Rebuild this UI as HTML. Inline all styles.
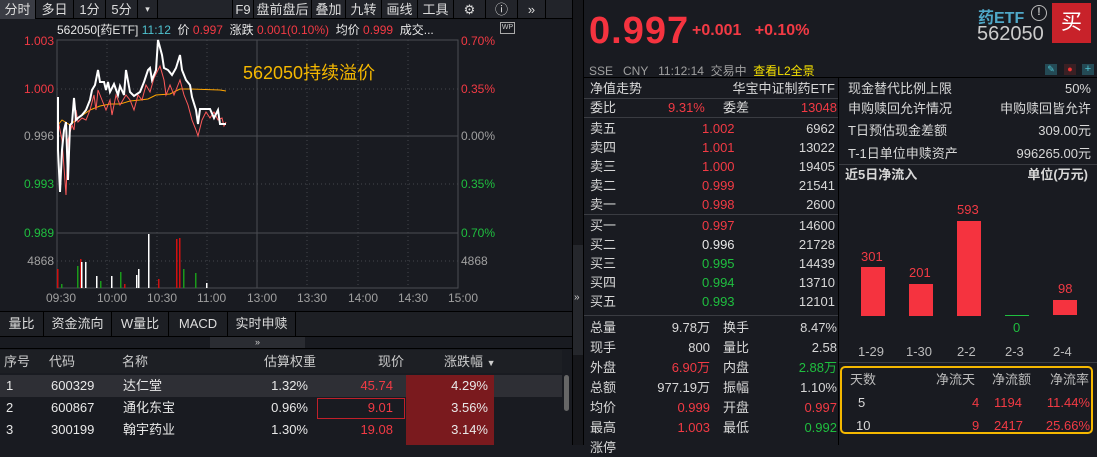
<!DOCTYPE html><html><head><meta charset="utf-8"><style>
*{margin:0;padding:0;box-sizing:border-box}
body{width:1097px;height:445px;background:#191b21;color:#d8d8d8;font-family:"Liberation Sans","Noto Sans CJK SC",sans-serif;font-size:12px;position:relative;overflow:hidden}
.a{position:absolute;white-space:nowrap}
.r{color:#f23a44}.g{color:#1fbf3f}.w{color:#e8e8e8}.gr{color:#a0a0a0}
.tb{position:absolute;top:0;height:19px;line-height:19px;font-size:13px;color:#ddd;text-align:center;border-right:1px solid #000}
.row{position:absolute;left:590px;width:245px;height:19px;font-size:13px;line-height:19px}
.row span{position:absolute;top:0;line-height:19px}
.rr{position:absolute;left:848px;width:243px;font-size:13px;height:19px;line-height:19px}
.rr span{position:absolute;top:0;line-height:19px}
</style></head><body>
<!-- toolbar -->
<div class="a" style="left:0;top:0;width:572px;height:19px;background:#22242a;border-bottom:1px solid #000"></div>
<div class="tb" style="left:0;width:36px;background:#3a3c44">分时</div>
<div class="tb" style="left:36px;width:38px">多日</div>
<div class="tb" style="left:74px;width:32px">1分</div>
<div class="tb" style="left:106px;width:32px">5分</div>
<div class="tb" style="left:138px;width:20px;font-size:9px">▾</div>
<div class="tb" style="left:232px;width:22px;border-left:1px solid #000">F9</div>
<div class="tb" style="left:254px;width:58px">盘前盘后</div>
<div class="tb" style="left:312px;width:34px">叠加</div>
<div class="tb" style="left:346px;width:36px">九转</div>
<div class="tb" style="left:382px;width:36px">画线</div>
<div class="tb" style="left:418px;width:36px">工具</div>
<div class="tb" style="left:454px;width:32px">⚙</div>
<div class="tb" style="left:486px;width:32px">ⓘ</div>
<div class="tb" style="left:518px;width:28px">»</div>
<div class="a" style="left:57px;top:21px;font-size:12px"><span class="w">562050[药ETF]</span> <span style="color:#4fc3d0">11:12</span> &nbsp;<span class="w">价</span> <span class="r">0.997</span> &nbsp;<span class="w">涨跌</span> <span class="r">0.001(0.10%)</span> &nbsp;<span class="w">均价</span> <span class="r">0.999</span> &nbsp;<span class="w">成交...</span></div>
<div class="a" style="left:500px;top:22px;width:15px;height:12px;border:1px solid #aaa;font-size:7px;line-height:10px;text-align:center;color:#ccc">WP</div>
<!-- axes labels -->
<div class="a r" style="left:0;top:34px;width:54px;text-align:right;font-size:12px">1.003</div>
<div class="a r" style="left:0;top:82px;width:54px;text-align:right">1.000</div>
<div class="a gr" style="left:0;top:129px;width:54px;text-align:right">0.996</div>
<div class="a g" style="left:0;top:177px;width:54px;text-align:right">0.993</div>
<div class="a g" style="left:0;top:226px;width:54px;text-align:right">0.989</div>
<div class="a gr" style="left:0;top:254px;width:54px;text-align:right">4868</div>
<div class="a r" style="left:461px;top:34px">0.70%</div>
<div class="a r" style="left:461px;top:82px">0.35%</div>
<div class="a gr" style="left:461px;top:129px">0.00%</div>
<div class="a g" style="left:461px;top:177px">0.35%</div>
<div class="a g" style="left:461px;top:226px">0.70%</div>
<div class="a gr" style="left:461px;top:254px">4868</div>
<svg class="a" style="left:0;top:0" width="572" height="310">
<g stroke="#45474d" stroke-dasharray="1,3" fill="none">
<line x1="57" y1="89" x2="458" y2="89"/><line x1="57" y1="184" x2="458" y2="184"/><line x1="57" y1="261" x2="458" y2="261"/>
<line x1="107" y1="40" x2="107" y2="288"/><line x1="157" y1="40" x2="157" y2="288"/><line x1="207" y1="40" x2="207" y2="288"/>
<line x1="307" y1="40" x2="307" y2="288"/><line x1="358" y1="40" x2="358" y2="288"/><line x1="408" y1="40" x2="408" y2="288"/>
</g>
<g stroke="#4a4c52" fill="none">
<rect x="57" y="40" width="401" height="248"/>
<line x1="57" y1="136" x2="458" y2="136"/><line x1="57" y1="233" x2="458" y2="233"/><line x1="257" y1="40" x2="257" y2="288"/>
</g>
<polyline fill="none" stroke="#ffa500" stroke-width="1" points="58,125 62,120 70,125 76,120 80,117 90,110 100,106 110,104 120,104 130,101 140,100 148,99 156,95 170,94 180,89 190,89 220,90 226,91"/>
<polyline fill="none" stroke="#ff5a5a" stroke-width="1" points="58,120 62,140 66,195 68,140 72,125 74,130 76,110 78,122 82,118 86,120 90,110 94,95 96,110 98,90 102,100 106,110 110,100 112,115 116,95 120,105 126,95 130,100 134,110 138,95 142,100 146,85 150,92 154,78 158,70 160,66 164,80 166,95 170,85 174,95 178,85 180,80 184,95 188,105 192,120 196,130 198,136 202,120 206,112 210,118 214,112 218,120 222,118 224,126 226,122"/>
<polyline fill="none" stroke="#fff" stroke-width="2" points="58,97 58,150 60,192 62,150 64,130 66,122 68,180 70,125 72,123 74,98 76,120 78,118 82,115 86,110 90,100 92,90 95,85 98,70 100,82 104,82 106,90 108,82 110,92 114,84 118,95 120,86 124,95 126,70 130,92 134,96 140,92 144,82 148,70 150,68 152,80 156,70 158,40 162,55 164,68 168,70 172,75 176,68 180,55 182,70 186,80 190,85 192,97 196,110 198,124 200,109 210,109 214,118 218,110 220,124 226,124"/>
<g fill="#d01010"><rect x="57" y="269" width="1.5" height="19"/><rect x="80" y="259" width="1.5" height="29"/><rect x="158" y="279" width="1.5" height="9"/><rect x="176" y="239" width="1.5" height="49"/><rect x="179" y="238" width="1.5" height="50"/><rect x="124" y="284" width="1.5" height="4"/></g>
<g fill="#fff"><rect x="81" y="262" width="1.5" height="26"/><rect x="85" y="262" width="1.5" height="26"/><rect x="96" y="276" width="1.5" height="12"/><rect x="111" y="276" width="1.5" height="12"/><rect x="136" y="275" width="1.5" height="13"/><rect x="138" y="269" width="1.5" height="19"/><rect x="148" y="234" width="1.5" height="54"/><rect x="206" y="283" width="1.5" height="5"/></g>
<g fill="#1a9a1a"><rect x="77" y="266" width="1.5" height="22"/><rect x="61" y="284" width="1.5" height="4"/><rect x="120" y="272" width="1.5" height="16"/><rect x="183" y="269" width="1.5" height="19"/><rect x="195" y="273" width="1.5" height="15"/><rect x="100" y="281" width="1.5" height="7"/></g>
</svg>
<div class="a" style="left:243px;top:59px;font-size:18px;color:#f5b800">562050持续溢价</div>
<div class="a gr" style="left:46px;top:291px;width:430px;font-size:12px">
<span class="a" style="left:0">09:30</span><span class="a" style="left:51px">10:00</span><span class="a" style="left:101px">10:30</span><span class="a" style="left:151px">11:00</span><span class="a" style="left:201px">13:00</span><span class="a" style="left:251px">13:30</span><span class="a" style="left:302px">14:00</span><span class="a" style="left:352px">14:30</span><span class="a" style="left:402px">15:00</span></div>
<!-- bottom tabs -->
<div class="a" style="left:0;top:311px;width:572px;height:26px;background:#1d1f24;border-top:1px solid #000;border-bottom:1px solid #000"></div>
<div class="a" style="left:0;top:312px;height:24px;line-height:24px;font-size:13px;color:#ddd">
<span class="a" style="left:0;width:44px;text-align:center;border-right:1px solid #000;height:24px">量比</span>
<span class="a" style="left:44px;width:68px;text-align:center;border-right:1px solid #000;height:24px">资金流向</span>
<span class="a" style="left:112px;width:57px;text-align:center;border-right:1px solid #000;height:24px">W量比</span>
<span class="a" style="left:169px;width:59px;text-align:center;border-right:1px solid #000;height:24px">MACD</span>
<span class="a" style="left:228px;width:68px;text-align:center;border-right:1px solid #000;height:24px">实时申赎</span></div>
<div class="a" style="left:210px;top:337px;width:95px;height:11px;background:#2a2c32;color:#ccc;font-size:9px;text-align:center;line-height:10px">»</div>
<div class="a" style="left:0;top:348px;width:572px;height:1px;background:#000"></div>
<div class="a" style="left:0;top:350px;width:562px;height:23px;font-size:13px;line-height:23px;color:#ccc;background:#1d1f24">
<span class="a" style="left:4px">序号</span><span class="a" style="left:49px">代码</span><span class="a" style="left:122px">名称</span><span class="a" style="left:264px">估算权重</span><span class="a" style="left:378px">现价</span><span class="a" style="left:444px">涨跌幅 <span style="font-size:9px">▼</span></span></div>
<div class="a" style="left:0;top:375px;width:562px;height:22px;background:#2e2f35"></div>
<div class="a" style="left:406px;top:375px;width:88px;height:70px;background:#7a1a1e"></div>
<div class="a" style="left:317px;top:398px;width:88px;height:21px;border:1px solid #c0202a"></div>
<div class="a" style="left:0;top:375px;width:562px;font-size:13px;line-height:22px;color:#e8e8e8">
<div style="position:relative;height:22px"><span class="a" style="left:6px">1</span><span class="a" style="left:51px">600329</span><span class="a" style="left:123px">达仁堂</span><span class="a" style="left:270px;width:38px;text-align:right">1.32%</span><span class="a r" style="left:350px;width:43px;text-align:right">45.74</span><span class="a" style="left:440px;width:48px;text-align:right">4.29%</span></div>
<div style="position:relative;height:22px"><span class="a" style="left:6px">2</span><span class="a" style="left:51px">600867</span><span class="a" style="left:123px">通化东宝</span><span class="a" style="left:270px;width:38px;text-align:right">0.96%</span><span class="a r" style="left:350px;width:43px;text-align:right">9.01</span><span class="a" style="left:440px;width:48px;text-align:right">3.56%</span></div>
<div style="position:relative;height:22px"><span class="a" style="left:6px">3</span><span class="a" style="left:51px">300199</span><span class="a" style="left:123px">翰宇药业</span><span class="a" style="left:270px;width:38px;text-align:right">1.30%</span><span class="a r" style="left:350px;width:43px;text-align:right">19.08</span><span class="a" style="left:440px;width:48px;text-align:right">3.14%</span></div></div>
<div class="a" style="left:564px;top:375px;width:5px;height:36px;background:#666;border-radius:3px"></div>
<!-- divider -->
<div class="a" style="left:572px;top:0;width:12px;height:445px;background:#16171b;border-left:1px solid #000;border-right:1px solid #000"></div>
<div class="a" style="left:573px;top:245px;width:10px;height:110px;background:#25272c"></div>
<div class="a" style="left:574px;top:292px;font-size:10px;color:#ccc">»</div>
<!-- right top -->
<div class="a r" style="left:589px;top:10px;font-size:38px;font-weight:bold;color:#f5333f;letter-spacing:1px">0.997</div>
<div class="a r" style="left:692px;top:22px;font-size:16px;font-weight:bold">+0.001 &nbsp; +0.10%</div>
<div class="a" style="left:978px;top:4px;font-size:16px;font-weight:bold;color:#4fa8c8">药ETF</div>
<div class="a" style="left:1031px;top:5px;width:16px;height:16px;border:1.5px solid #bbb;border-radius:50%;font-size:11px;text-align:center;line-height:13px;color:#bbb;font-weight:bold">!</div>
<div class="a" style="left:977px;top:23px;font-size:20px;color:#ccc">562050</div>
<div class="a" style="left:1052px;top:3px;width:39px;height:40px;background:#c8222a;color:#fff;font-size:21px;text-align:center;line-height:40px">买</div>
<div class="a gr" style="left:589px;top:62px;font-size:12px">SSE &nbsp; CNY &nbsp; 11:12:14 &nbsp;交易中 &nbsp;<span style="color:#f5e000">查看L2全景</span></div>
<div class="a" style="left:1045px;top:64px;width:12px;height:11px;background:#244a55;color:#4fc3d0;font-size:9px;text-align:center;line-height:11px">✎</div>
<div class="a" style="left:1064px;top:64px;width:12px;height:11px;background:#3a2024;color:#e33;font-size:9px;text-align:center;line-height:11px">●</div>
<div class="a" style="left:1082px;top:64px;width:12px;height:11px;background:#244a55;color:#4fc3d0;font-size:11px;text-align:center;line-height:11px">+</div>
<div class="a" style="left:584px;top:77px;width:513px;height:1px;background:#000"></div>
<div class="a" style="left:838px;top:78px;width:1px;height:367px;background:#000"></div>
<!-- order book -->
<div class="row" style="top:79px"><span style="left:0">净值走势</span><span style="right:0">华宝中证制药ETF</span></div>
<div class="a" style="left:584px;top:98px;width:254px;height:1px;background:#3a3c42"></div>
<div class="row" style="top:98px"><span style="left:0">委比</span><span class="r" style="left:78px">9.31%</span><span style="left:133px">委差</span><span class="r" style="right:-2px">13048</span></div>
<div class="a" style="left:584px;top:117px;width:254px;height:1px;background:#3a3c42"></div>
<div class="row" style="top:119px"><span>卖五</span><span class="r" style="left:112px">1.002</span><span style="right:0">6962</span></div>
<div class="row" style="top:138px"><span>卖四</span><span class="r" style="left:112px">1.001</span><span style="right:0">13022</span></div>
<div class="row" style="top:157px"><span>卖三</span><span class="r" style="left:112px">1.000</span><span style="right:0">19405</span></div>
<div class="row" style="top:176px"><span>卖二</span><span class="r" style="left:112px">0.999</span><span style="right:0">21541</span></div>
<div class="row" style="top:195px"><span>卖一</span><span class="r" style="left:112px">0.998</span><span style="right:0">2600</span></div>
<div class="a" style="left:584px;top:214px;width:254px;height:1px;background:#3a3c42"></div>
<div class="row" style="top:216px"><span>买一</span><span class="r" style="left:112px">0.997</span><span style="right:0">14600</span></div>
<div class="row" style="top:235px"><span>买二</span><span class="w" style="left:112px">0.996</span><span style="right:0">21728</span></div>
<div class="row" style="top:254px"><span>买三</span><span class="g" style="left:112px">0.995</span><span style="right:0">14439</span></div>
<div class="row" style="top:273px"><span>买四</span><span class="g" style="left:112px">0.994</span><span style="right:0">13710</span></div>
<div class="row" style="top:292px"><span>买五</span><span class="g" style="left:112px">0.993</span><span style="right:0">12101</span></div>
<div class="a" style="left:584px;top:315px;width:254px;height:1px;background:#3a3c42"></div>
<div class="row" style="top:318px"><span>总量</span><span style="right:125px">9.78万</span><span style="left:133px">换手</span><span style="right:-2px">8.47%</span></div>
<div class="row" style="top:338px"><span>现手</span><span style="right:125px">800</span><span style="left:133px">量比</span><span style="right:-2px">2.58</span></div>
<div class="row" style="top:358px"><span>外盘</span><span class="r" style="right:125px">6.90万</span><span style="left:133px">内盘</span><span class="g" style="right:-2px">2.88万</span></div>
<div class="row" style="top:378px"><span>总额</span><span style="right:125px">977.19万</span><span style="left:133px">振幅</span><span style="right:-2px">1.10%</span></div>
<div class="row" style="top:398px"><span>均价</span><span class="r" style="right:125px">0.999</span><span style="left:133px">开盘</span><span class="r" style="right:-2px">0.997</span></div>
<div class="row" style="top:418px"><span>最高</span><span class="r" style="right:125px">1.003</span><span style="left:133px">最低</span><span class="g" style="right:-2px">0.992</span></div>
<div class="row" style="top:438px"><span>涨停</span></div>
<!-- right info -->
<div class="rr" style="top:79px"><span style="left:0">现金替代比例上限</span><span style="right:0">50%</span></div>
<div class="rr" style="top:99px"><span style="left:0">申购赎回允许情况</span><span style="right:0">申购赎回皆允许</span></div>
<div class="rr" style="top:121px"><span style="left:0">T日预估现金差额</span><span style="right:0">309.00元</span></div>
<div class="rr" style="top:144px"><span style="left:0">T-1日单位申赎资产</span><span style="right:0">996265.00元</span></div>
<div class="a" style="left:839px;top:164px;width:258px;height:1px;background:#3a3c42"></div>
<div class="rr" style="top:165px;left:845px;font-weight:bold"><span style="left:0">近5日净流入</span><span style="right:0">单位(万元)</span></div>
<div class="a" style="left:861px;top:267px;width:24px;height:49px;background:#f5333f"></div>
<div class="a" style="left:909px;top:284px;width:24px;height:32px;background:#f5333f"></div>
<div class="a" style="left:957px;top:221px;width:24px;height:95px;background:#f5333f"></div>
<div class="a" style="left:1005px;top:315px;width:24px;height:1px;background:#1fbf3f"></div>
<div class="a" style="left:1053px;top:300px;width:24px;height:15px;background:#f5333f"></div>
<div class="a r" style="left:861px;top:249px;font-size:13px">301</div>
<div class="a r" style="left:909px;top:265px;font-size:13px">201</div>
<div class="a r" style="left:957px;top:202px;font-size:13px">593</div>
<div class="a g" style="left:1013px;top:320px;font-size:13px">0</div>
<div class="a r" style="left:1058px;top:281px;font-size:13px">98</div>
<div class="a" style="left:858px;top:344px;font-size:13px;color:#bbb">1-29</div>
<div class="a" style="left:906px;top:344px;font-size:13px;color:#bbb">1-30</div>
<div class="a" style="left:957px;top:344px;font-size:13px;color:#bbb">2-2</div>
<div class="a" style="left:1005px;top:344px;font-size:13px;color:#bbb">2-3</div>
<div class="a" style="left:1053px;top:344px;font-size:13px;color:#bbb">2-4</div>
<div class="a" style="left:839px;top:362px;width:258px;height:1px;background:#3a3c42"></div>
<div class="a" style="left:840px;top:366px;width:253px;height:68px;border:2px solid #f5b800;border-radius:5px"></div>
<div class="rr" style="top:370px;left:850px;width:240px;color:#bbb"><span style="left:0">天数</span><span style="left:86px">净流天</span><span style="left:142px">净流额</span><span style="left:200px">净流率</span></div>
<div class="rr" style="top:393px;left:850px;width:240px"><span style="left:8px">5</span><span class="r" style="left:122px">4</span><span class="r" style="left:144px">1194</span><span class="r" style="right:0">11.44%</span></div>
<div class="rr" style="top:416px;left:850px;width:240px"><span style="left:6px">10</span><span class="r" style="left:122px">9</span><span class="r" style="left:144px">2417</span><span class="r" style="right:0">25.66%</span></div>
</body></html>
